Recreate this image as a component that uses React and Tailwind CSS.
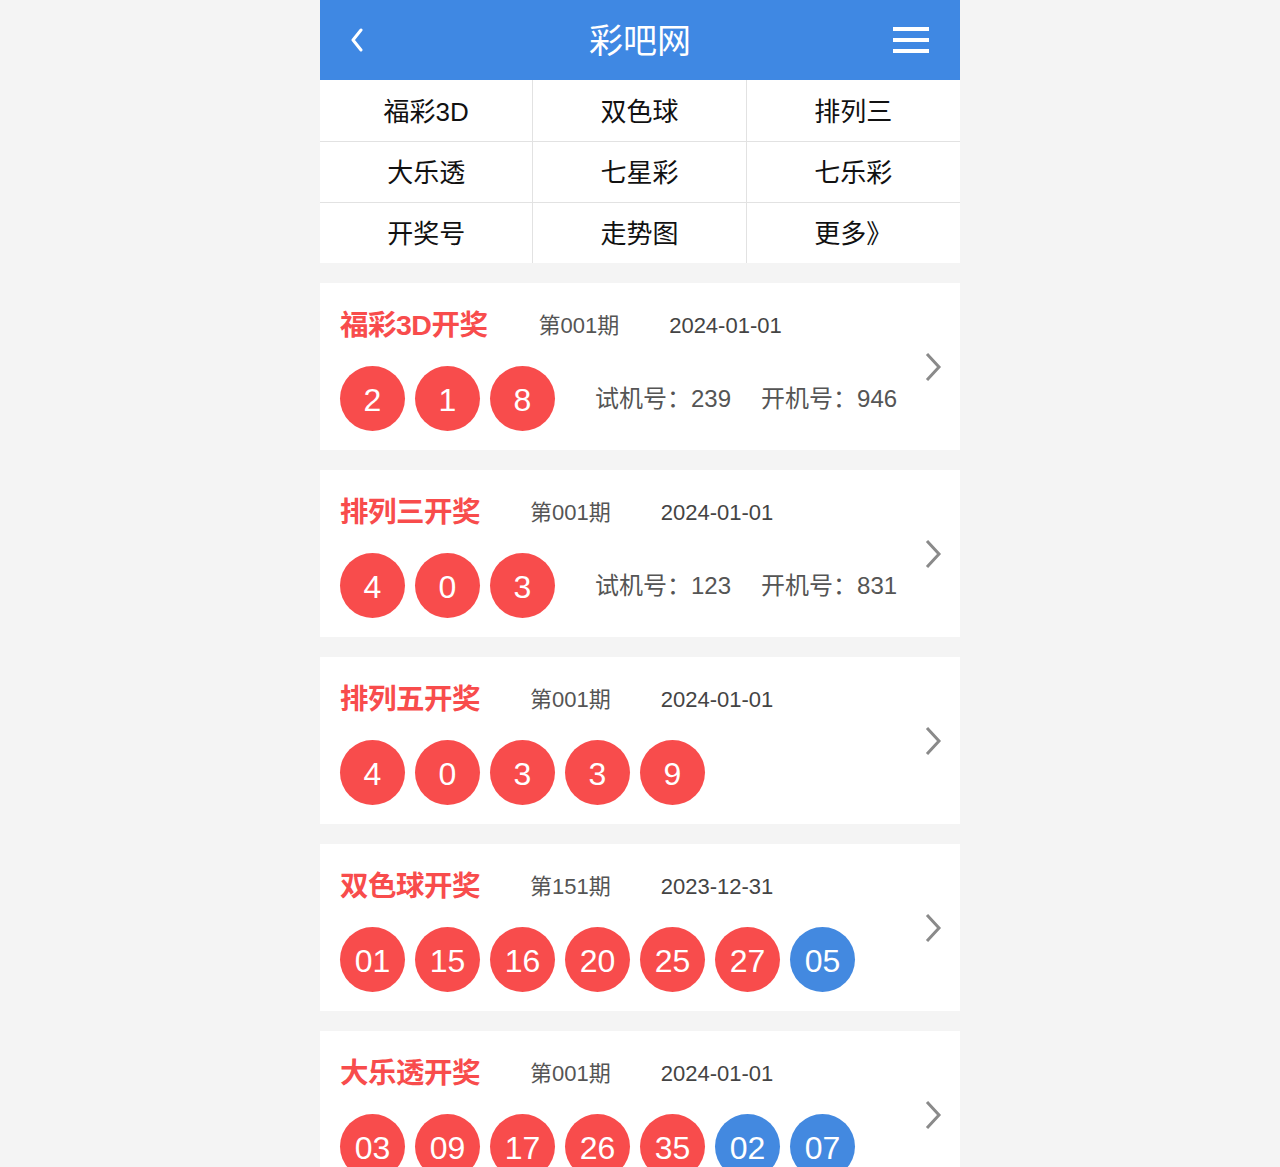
import React from "react";

const navItems = ["福彩3D", "双色球", "排列三", "大乐透", "七星彩", "七乐彩", "开奖号", "走势图", "更多》"];

const draws = [
  { name: "福彩3D开奖", issue: "第001期", date: "2024-01-01", red: ["2", "1", "8"], blue: [], extra: { test: "239", open: "946" }, gap: "ml-[51px]" },
  { name: "排列三开奖", issue: "第001期", date: "2024-01-01", red: ["4", "0", "3"], blue: [], extra: { test: "123", open: "831" } },
  { name: "排列五开奖", issue: "第001期", date: "2024-01-01", red: ["4", "0", "3", "3", "9"], blue: [] },
  { name: "双色球开奖", issue: "第151期", date: "2023-12-31", red: ["01", "15", "16", "20", "25", "27"], blue: ["05"] },
  { name: "大乐透开奖", issue: "第001期", date: "2024-01-01", red: ["03", "09", "17", "26", "35"], blue: ["02", "07"] },
];

const Ball = ({ n, blue }) => (
  <div
    className={`w-[65px] h-[65px] rounded-full flex items-center justify-center text-white text-[32px] pt-[2px] ${
      blue ? "bg-[#4389e0]" : "bg-[#f84c4c]"
    }`}
  >
    {n}
  </div>
);

// 单个开奖卡片
const DrawCard = ({ d }) => (
  <div className="bg-white flex items-center mt-5">
    <div className="flex-1 pl-5 pt-[22px] pb-[19px]">
      <div className="flex items-center h-10">
        <span className="text-[28.5px] font-bold text-[#f84c4c] tracking-[-0.5px]">{d.name}</span>
        <span className={`${d.gap || "ml-[50px]"} text-[22px] text-[#555]`}>{d.issue}</span>
        <span className="ml-[50px] text-[22px] text-[#444]">{d.date}</span>
      </div>
      <div className="flex items-center mt-[21px] h-[65px]">
        <div className="flex gap-[10px]">
          {d.red.map((n, i) => (
            <Ball key={"r" + i} n={n} />
          ))}
          {d.blue.map((n, i) => (
            <Ball key={"b" + i} n={n} blue />
          ))}
        </div>
        {d.extra && (
          <div className="ml-10 text-[24px] text-[#555] flex">
            <span>试机号：{d.extra.test}</span>
            <span className="ml-[30px]">开机号：{d.extra.open}</span>
          </div>
        )}
      </div>
    </div>
    <div className="pr-[18px]">
      <svg width="18" height="30" viewBox="0 0 18 30" fill="none">
        <path d="M3 2 L15 15 L3 28" stroke="#8a8a8a" strokeWidth="3" />
      </svg>
    </div>
  </div>
);

export default function App() {
  return (
    <div
      className="min-h-screen bg-[#f4f4f4]"
      style={{ fontFamily: '"Liberation Sans", Arial, "Noto Sans CJK SC", sans-serif' }}
    >
      <div className="w-[640px] mx-auto">
        {/* 头部 */}
        <header className="h-20 bg-[#3f88e3] grid grid-cols-[80px_1fr_80px] items-center text-white">
          <div className="pl-[30px]">
            <svg width="14" height="24" viewBox="0 0 14 24" fill="none">
              <path d="M11 2 L3 12 L11 22" stroke="white" strokeWidth="3" strokeLinecap="round" strokeLinejoin="round" />
            </svg>
          </div>
          <h1 className="text-[34px] leading-none text-center pt-[2px]">彩吧网</h1>
          <div className="flex justify-end pr-[31px]">
            <div className="flex flex-col gap-[7px] w-9">
              <div className="h-[4px] bg-white" />
              <div className="h-[4px] bg-white" />
              <div className="h-[4px] bg-white" />
            </div>
          </div>
        </header>

        {/* 导航 */}
        <div className="grid grid-cols-3 bg-white">
          {navItems.map((t, i) => (
            <div
              key={t}
              className={`flex items-center justify-center text-[26px] text-[#111] pt-[3px] ${
                i < 3 ? "h-[62px]" : i < 6 ? "h-[61px]" : "h-[60px]"
              } ${i % 3 !== 2 ? "border-r border-[#e2e2e2]" : ""} ${i < 6 ? "border-b border-[#e2e2e2]" : ""}`}
            >
              {t}
            </div>
          ))}
        </div>

        {draws.map((d) => (
          <DrawCard key={d.name} d={d} />
        ))}
      </div>
    </div>
  );
}
